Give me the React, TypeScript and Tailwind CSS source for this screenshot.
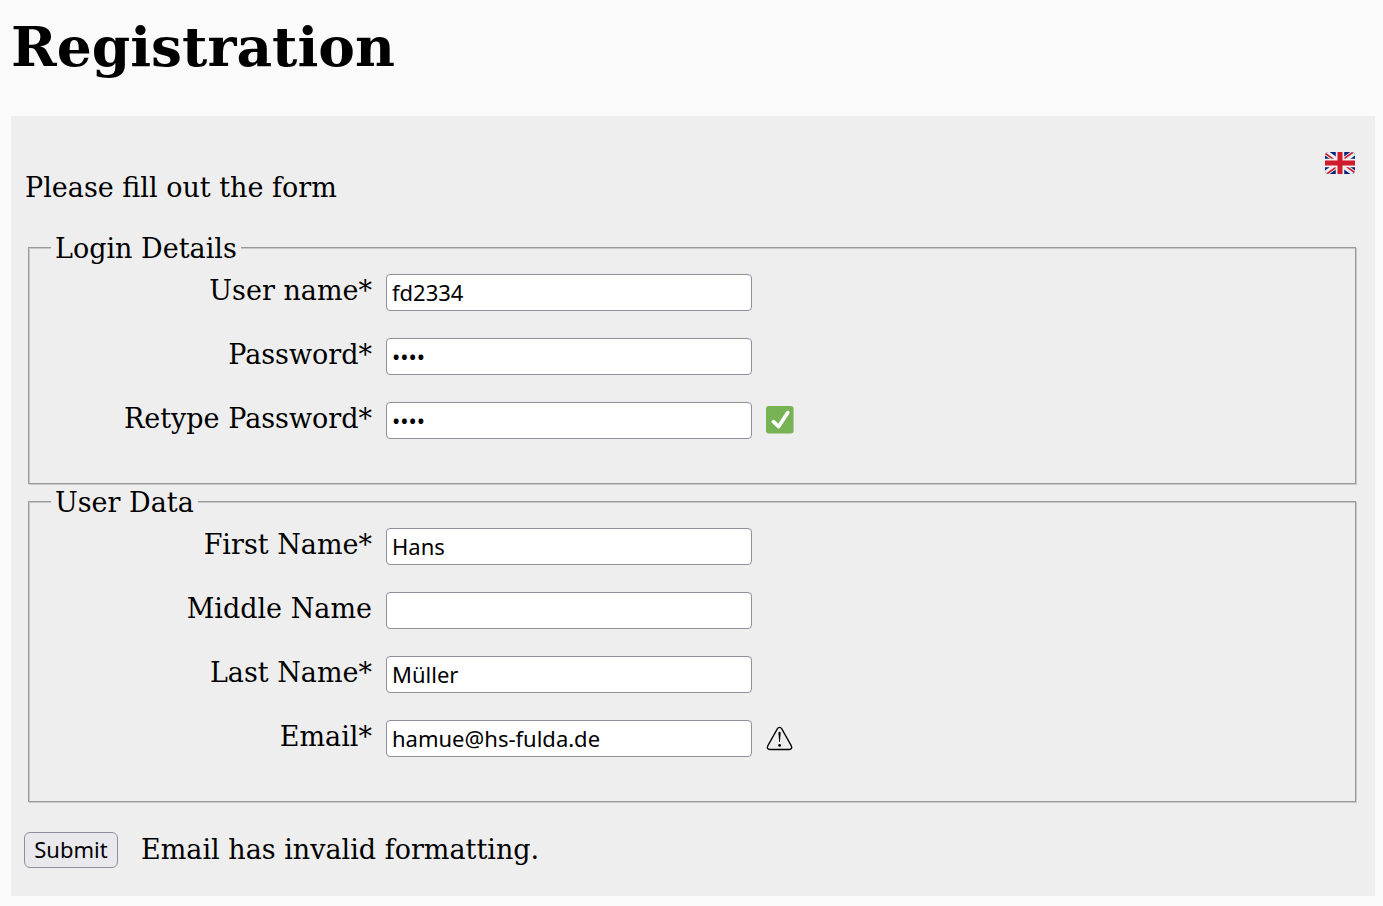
import { useState } from "react";
import type { ReactNode } from "react";

type FieldProps = {
  id: string;
  label: string;
  type?: string;
  initial?: string;
  status?: ReactNode;
};

function Field({ id, label, type = "text", initial = "", status }: FieldProps) {
  const [value, setValue] = useState(initial);
  return (
    <div className="flex items-start">
      <label htmlFor={id} className="w-[321px] shrink-0 text-right">
        {label}
      </label>
      <input
        id={id}
        name={id}
        type={type}
        value={value}
        onChange={(e) => setValue(e.target.value)}
        className="ml-3.5 h-[37px] w-[366px] min-w-0 rounded-[4px] border border-[#8f8f9d] bg-white px-[5px] pb-0.5 font-['Noto_Sans',sans-serif] text-[22px] text-black"
      />
      {status && <span className="ml-3.5 flex h-9 shrink-0 items-center">{status}</span>}
    </div>
  );
}

function Group({ title, children }: { title: string; children: ReactNode }) {
  return (
    <fieldset className="mr-[5px] ml-[3px] border border-[#9a9a9a] pr-5 pb-11 pl-[22px] shadow-[1px_1px_0_#c8c8c8,inset_1px_1px_0_#c8c8c8]">
      <legend className="bg-[#eeeeee] px-1 pt-1 leading-7">{title}</legend>
      <div className="flex flex-col gap-[27px] pt-[11px]">{children}</div>
    </fieldset>
  );
}

function UkFlag() {
  return (
    <svg viewBox="0 0 60 44" className="block h-[22px] w-[30px]" aria-hidden="true">
      <defs>
        <clipPath id="flag-shape">
          <rect width="60" height="44" rx="8" />
        </clipPath>
      </defs>
      <g clipPath="url(#flag-shape)">
        <rect width="60" height="44" fill="#00247d" />
        <path d="M0 0 60 44M60 0 0 44" stroke="#eee" strokeWidth="11" />
        <path
          d="M0 2.5 27 22.3M60 41.5 33 21.7M60 -2.5 33 17.3M0 46.5 27 26.7"
          stroke="#cf1b2b"
          strokeWidth="3.4"
        />
        <path d="M30 0V44M0 22H60" stroke="#eee" strokeWidth="17" />
        <path d="M30 0V44M0 22H60" stroke="#cf1b2b" strokeWidth="10" />
      </g>
    </svg>
  );
}

function CheckMark() {
  return (
    <svg viewBox="0 0 36 36" className="block size-7" role="img" aria-label="Passwords match">
      <rect width="35.4" height="35.4" rx="3.5" fill="#77b255" />
      <path
        d="M29.3 6.4c-1.1-.7-2.6-.4-3.3.7L15.8 22.7 11.1 18.4c-1-.9-2.5-.9-3.4.1-.9 1-.8 2.5.2 3.4l6.8 6.3c.5.4 1.1.7 1.6.7.6 0 1.3-.2 1.8-1L30 9.7c.7-1.1.4-2.6-.7-3.3z"
        fill="#fff"
      />
    </svg>
  );
}

function Warning() {
  return (
    <svg viewBox="0 -1 28 28" className="block size-7" role="img" aria-label="Invalid email">
      <path
        d="M11.3 3.9 1.9 20.6C.6 22.9 1.6 24.5 4 24.5H23.1C25.5 24.5 26.5 22.9 25.2 20.6L15.8 3.9C14.6 1.9 12.5 1.9 11.3 3.9Z"
        fill="none"
        stroke="#000"
        strokeWidth="1.3"
      />
      <path d="M12.4 8C12.4 6.4 14.7 6.4 14.7 8L13.9 17H13.2Z" fill="#000" />
      <circle cx="13.6" cy="20.4" r="1.4" fill="#000" />
    </svg>
  );
}

export default function App() {
  return (
    <main className="min-h-screen bg-[#fafafa] pt-4 pr-2 pb-2.5 pl-[11px] font-['DejaVu_Serif',serif] text-[27px] leading-[34px] text-black">
      <h1 className="text-[55px] leading-[61px] font-bold">Registration</h1>
      <form
        onSubmit={(e) => e.preventDefault()}
        className="mt-[39px] bg-[#eeeeee] px-3.5 pt-9 pb-7"
      >
        <div className="flex items-start justify-between">
          <p className="mt-[19px]">Please fill out the form</p>
          <button type="button" aria-label="English" className="mr-1.5">
            <UkFlag />
          </button>
        </div>
        <div className="mt-[26px] flex flex-col gap-px">
          <Group title="Login Details">
            <Field id="username" label="User name*" initial="fd2334" />
            <Field id="password" label="Password*" type="password" initial="1234" />
            <Field
              id="retype"
              label="Retype Password*"
              type="password"
              initial="1234"
              status={<CheckMark />}
            />
          </Group>
          <Group title="User Data">
            <Field id="first" label="First Name*" initial="Hans" />
            <Field id="middle" label="Middle Name" />
            <Field id="last" label="Last Name*" initial="Müller" />
            <Field id="email" label="Email*" initial="hamue@hs-fulda.de" status={<Warning />} />
          </Group>
        </div>
        <div className="mt-[30px] flex items-start">
          <button
            type="submit"
            className="-ml-px h-9 w-[94px] rounded-md border border-[#8f8f9d] bg-[#e9e9ed] pb-0.5 font-['Noto_Sans',sans-serif] text-[22px] leading-8"
          >
            Submit
          </button>
          <p className="mt-px ml-[23px]" role="status">
            Email has invalid formatting.
          </p>
        </div>
      </form>
    </main>
  );
}
